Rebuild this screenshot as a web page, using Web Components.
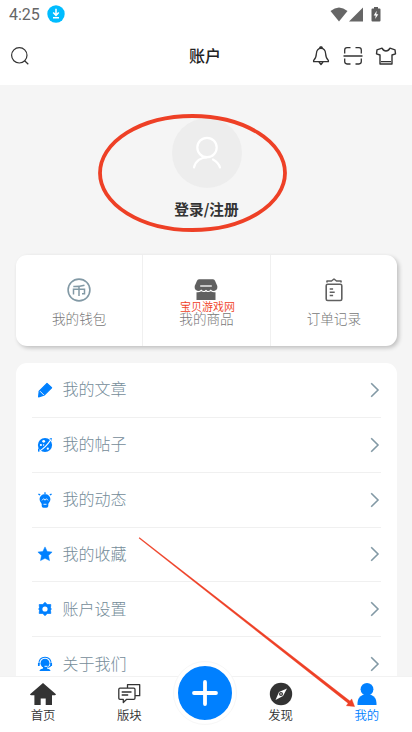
<!DOCTYPE html>
<html lang="zh-CN">
<head>
<meta charset="utf-8">
<title>账户</title>
<style>
html,body{margin:0;padding:0;width:412px;height:732px;overflow:hidden;background:#f5f5f5;font-family:"Noto Sans CJK SC","Noto Sans",sans-serif}
</style>
</head>
<body>
<account-app></account-app>
<script>
const ICONS = {
  download: [18,18,'<circle cx="9" cy="9" r="8.7" fill="#00bcff"/><path d="M9 3.8v6M6.200 7.400 9 10.300l2.800-2.900M6 12.800h6" stroke="#fff" stroke-width="1.500" fill="none"/>'],
  wifi: [18,15,'<path d="M.5 4Q9-3 17.500 4L9 14.500Z" fill="#666"/>'],
  signal: [14,15,'<path d="M14 .5V14.500H0Z" fill="#666"/>'],
  battery: [10,15,'<path d="M3 0h4v1.500h1.500Q9.500 1.500 9.500 2.500v11q0 1-1 1h-7q-1 0-1-1v-11q0-1 1-1H3Z" fill="#5e5e5e"/><path d="M5.700 3.700 2.700 8.500h2l-.5 3.500L7.300 7.200h-2Z" fill="#fff"/>'],
  search: [20,20,'<g fill="none" stroke="#333" stroke-width="1.200"><circle cx="9.300" cy="9.300" r="7.700"/><path d="m14.600 14.800 3.700 3.500"/></g>'],
  bell: [18,20,'<g fill="none" stroke="#333" stroke-width="1.300" stroke-linejoin="round"><path d="M9 2.300C5.800 2.300 4.600 4.700 4.400 7.500c-.2 4-1.200 5.600-2.800 7v1.200h14.800v-1.200c-1.600-1.400-2.600-3-2.800-7-.2-2.800-1.400-5.200-4.600-5.200ZM7 16l2 2.500 2-2.500M7.600 2.300 8.300.9h1.400l.7 1.400"/></g>'],
  scan: [20,20,'<path d="M7.500 1.600H4Q1.700 1.600 1.700 4v3.500M12.500 1.600H16q2.300 0 2.300 2.400v3.500M7.500 18H4q-2.300 0-2.300-2.400v-3M12.500 18H16q2.300 0 2.300-2.400v-3M.5 10h19" fill="none" stroke="#333" stroke-width="1.300"/>'],
  shirt: [22,20,'<path d="M7 2.200 2 3.800 1.500 7.800 5 9v9h12V9l3.500-1.200L20 3.800 15 2.200Q13.500 5 11 5T7 2.200ZM6 15.600h10" fill="none" stroke="#333" stroke-width="1.400" stroke-linejoin="round"/>'],
  avatar: [32,36,'<g fill="none" stroke="#fff" stroke-width="2.200" stroke-linecap="round"><circle cx="16" cy="12.500" r="9.700"/><path d="M3 32.500C4.500 26 10 22.300 16 22.300M22 24.500q5.500 3 7 8"/></g>'],
  wallet: [24,24,'<g fill="none" stroke="#8299a5"><circle cx="12" cy="12" r="10.900" stroke-width="1.600"/><path d="M17.500 7.300Q12 8.700 6.300 8.500M6.500 16.500v-5.300h11v4.500H15M12 8v10" stroke-width="1.500"/></g>'],
  shop: [24,24,'<path d="M5 1.200h14q1.500 0 2 1.600L23.300 8v2.200Q22.500 13 20 13q-2 0-3.200-1.600Q15.500 13 13.700 13L12 11.800 10.300 13Q8.500 13 7.200 11.400 6 13 4 13 1.500 13 .7 10.200V8L3 2.800Q3.500 1.200 5 1.200ZM2.500 14.200Q5 14.800 7.200 13.300q2.300 1.500 4.800.2 2.500 1.300 4.800-.2 2.200 1.500 4.700.9V22h-19Z" fill="#606060"/><path d="M6.200 8h11.600" stroke="#fff" stroke-width="1.300"/>'],
  orders: [20,24,'<g fill="none" stroke="#606060" stroke-width="1.600" stroke-linejoin="round"><rect x="2.200" y="6.200" width="15.600" height="16.300" rx="1.500"/><path d="M3 4.400V3h4.500L10 1l2.500 2H17v1.400M5.700 11h3.400M5.700 14.300h5M5.700 17.500h3.400"/></g>'],
  pencil: [16,16,'<path d="m10 1.500 4.600 4.200-7.600 7.500-5.400 1.600.6-5.600Z" fill="#0080ff" stroke="#0080ff" stroke-width="1.200" stroke-linejoin="round"/><path d="m3 9.200 4 4" stroke="#fff" stroke-width=".9"/>'],
  planet: [16,16,'<circle cx="8" cy="8" r="7.100" fill="#0080ff"/><path d="M1 11v3.800l3-.8M12.500 1.600l2.400-.6-.5 3" fill="#0080ff"/><path d="M2.500 14C7 11.500 11 7 14 2.500" fill="none" stroke="#fff" stroke-width="1.200"/><g fill="#fff"><circle cx="6.700" cy="4.300" r="1.400"/><circle cx="3.900" cy="8" r="1.100"/><circle cx="10.800" cy="11.700" r="1.100"/><circle cx="6.600" cy="8" r=".7"/></g>'],
  bulb: [16,16,'<path d="M8 2.200c-3.200 0-5.400 2.100-5.400 5 0 2.400 1.600 3.200 2.100 4.800V14q0 1.800 1.800 1.800h3q1.800 0 1.800-1.800v-2c.5-1.600 2.100-2.400 2.100-4.800 0-2.900-2.200-5-5.400-5Z" fill="#0080ff"/><path d="M8 .2v2M1.400 2.100l1.800.8M14.600 2.100l-1.800.8" stroke="#0080ff" stroke-width="1.300"/><path d="m5 8.400 1.700-1.700L8 8.200l1.400-1.500L11 8.400M6.500 12.300h3" fill="none" stroke="#fff" stroke-width=".9"/>'],
  star: [16,16,'<path d="m8 .9 2.200 4.600 4.900.6-3.600 3.500 1 5L8 12.300l-4.500 2.300 1-5L.9 6.100l4.900-.6Z" fill="#0080ff" stroke="#0080ff" stroke-width=".5"/>'],
  gear: [16,16,'<path d="M8 1.300 10.200 3.600h3.600l-.3 2.900L14.200 8l-.7 1.500.3 2.900h-3.600L8 14.700l-2.200-2.300H2.200l.3-2.900L1.800 8l.7-1.500-.3-2.900h3.600Z" fill="#0080ff" stroke="#0080ff" stroke-width=".8" stroke-linejoin="round"/><circle cx="8" cy="8" r="2.600" fill="#fff"/>'],
  support: [16,16,'<path d="M2 8.500C1.500 4 4 1.300 8 1.300S14.500 4 14 8.500q0 2.500-3.500 3" fill="none" stroke="#0080ff" stroke-width="1.100"/><circle cx="8" cy="7.300" r="4.500" fill="#0080ff"/><path d="M1.800 7v3M14.200 7v3" stroke="#0080ff" stroke-width="1.700"/><path d="M2.300 15Q3 12.800 6 12.500V11h4v1.500q3 .3 3.700 2.500Z" fill="#0080ff"/><path d="M7.500 10.300h3" stroke="#fff" stroke-width="1"/>'],
  chevron: [10,16,'<path d="m1.200 1.200 6.800 6.800-6.800 6.800" fill="none" stroke="#8299a5" stroke-width="1.600"/>'],
  home: [26,24,'<path d="M13 1 26 12.300q-.5 1-1.500.9H22V23h-6.300v-6.500h-5V23H4.400v-9.800H1.500Q.2 13.300 0 12.300Z" fill="#333"/>'],
  chat: [24,24,'<g fill="none" stroke="#333" stroke-width="1.300" stroke-linejoin="round"><path d="M10.500 6V2.700h12.200v11h-4.200M3 6.200h13.800q1.200 0 1.200 1.200v8.700q0 1.200-1.200 1.200H9.700L6.300 20.500v-3.200H3q-1.200 0-1.200-1.200V7.400Q1.800 6.200 3 6.200ZM4.700 10h9.800M4.700 13h6.500"/></g>'],
  compass: [24,24,'<circle cx="12" cy="12" r="11.200" fill="#333"/><path d="M18 6.500 14 14l-7.500 4L10 10Z" fill="#fff"/><circle cx="12" cy="12" r="2" fill="#333"/><circle cx="12" cy="12" r=".8" fill="#fff"/>'],
  person: [20,24,'<circle cx="10" cy="7.300" r="6.400" fill="#0080ff"/><path d="M.5 23v-2q0-6 5.500-8.300h8q5.500 2.300 5.500 8.300v2Z" fill="#0080ff"/>'],
  plus: [26,26,'<path d="M13 2v22M2 13h22" stroke="#fff" stroke-width="3.800" stroke-linecap="round"/>']
};
function define(name, markup) {
  customElements.define(name, class extends HTMLElement {
    connectedCallback() {
      if (this.shadowRoot) return;
      const t = document.createElement('template');
      t.innerHTML = typeof markup === 'function' ? markup(this) : markup;
      this.attachShadow({mode:'open'}).append(t.content.cloneNode(true));
    }
  });
}
define('ui-icon', el => {
  const [w,h,art] = ICONS[el.getAttribute('name')];
  return `<style>:host{display:block;flex:none;width:${w}px;height:${h}px}svg{display:block}</style><svg width="${w}" height="${h}" viewBox="0 0 ${w} ${h}">${art}</svg>`;
});
define('status-bar', `<style>
:host{display:flex;height:28px;align-items:center;padding:0 31px 0 9px;box-sizing:border-box;background:#fff}
span{font:16px/20px Roboto,sans-serif;color:#666;margin:1px 7px 0 0}
.gap{flex:1}.bat{margin-left:8px}.sig{margin-left:1px}
</style><span>4:25</span><ui-icon name="download"></ui-icon><div class="gap"></div><ui-icon name="wifi"></ui-icon><ui-icon class="sig" name="signal"></ui-icon><ui-icon class="bat" name="battery"></ui-icon>`);
define('title-bar', `<style>
:host{display:grid;grid-template-columns:1fr auto 1fr;align-items:center;height:57px;background:#fff;padding:0 15px 2px 10px;box-sizing:border-box}
h1{margin:0 0 1px 3px;font-size:16px;line-height:24px;font-weight:500;color:#222}
.r{display:flex;justify-content:flex-end;align-items:center;gap:12.500px}
</style><ui-icon name="search"></ui-icon><h1><slot></slot></h1><div class="r"><ui-icon name="bell"></ui-icon><ui-icon name="scan"></ui-icon><ui-icon name="shirt"></ui-icon></div>`);
define('user-profile', `<style>
:host{display:flex;flex-direction:column;align-items:center;height:170px;box-sizing:border-box;padding:32.500px 0 0 1px}
.a{width:70px;height:70px;border-radius:50%;background:#ededed;display:flex;align-items:center;justify-content:center}
b{font-size:14.700px;line-height:20px;font-weight:700;color:#333;margin-top:11.500px}
</style><div class="a"><ui-icon name="avatar"></ui-icon></div><b><slot></slot></b>`);
define('quick-card', `<style>
:host{display:flex;margin:0 15px 0 16px;height:91px;border-radius:11px;background:#fff;box-shadow:2px 2px 4px rgba(0,0,0,.22)}
</style><slot></slot>`);
define('quick-item', el => `<style>
:host{flex:1 1 0;width:0;display:flex;flex-direction:column;align-items:center;padding-top:23px;box-sizing:border-box}
:host(:not(:last-child)){border-right:1px solid #f0f0f0}
span{font-size:13.600px;line-height:20px;margin-top:6px;color:#777;font-weight:300}
</style><ui-icon name="${el.getAttribute('icon')}"></ui-icon><span><slot></slot></span>`);
define('menu-card', `<style>
:host{display:block;margin:17px 15px 0 16px;padding:0 16px;background:#fff;border-radius:11px;height:380px}
</style><slot></slot>`);
define('menu-row', el => `<style>
:host{display:flex;align-items:center;height:54.850px;box-sizing:border-box;border-bottom:1px solid #f0f0f0;padding:0 1px 0 5px}
span{flex:1;font-size:16px;line-height:24px;color:#748c99;font-weight:300;margin:0 0 3px 9.500px}
</style><ui-icon name="${el.getAttribute('icon')}"></ui-icon><span><slot></slot></span><ui-icon name="chevron"></ui-icon>`);
define('tab-item', el => `<style>
:host{flex:1 1 0;display:flex;flex-direction:column;align-items:center;padding-top:5px;color:#333}
:host([active]){color:#0080ff}
span{font-size:12.400px;line-height:18px;font-weight:350}
</style><ui-icon name="${el.getAttribute('icon')}"></ui-icon><span><slot></slot></span>`);
define('add-button', `<style>
:host{flex:0 0 65px;display:flex;justify-content:center;align-items:flex-start}
div{flex:none;width:54px;height:54px;border-radius:50%;background:#0080ff;border:4px solid #fff;outline:1px solid #f7f7f7;margin-top:-15px;display:flex;align-items:center;justify-content:center}
</style><div><ui-icon name="plus"></ui-icon></div>`);
define('tab-bar', `<style>
:host{position:absolute;left:0;right:0;bottom:0;height:56px;box-sizing:border-box;background:#fff;border-top:1px solid #f2f2f2;display:flex;padding-right:2px}
</style><slot></slot>`);
define('mark-overlay', `<style>
:host{position:absolute;inset:0;pointer-events:none}
svg{position:absolute;inset:0}
span{position:absolute;left:180px;top:298px;font-size:11px;line-height:16px;color:#f04026;white-space:nowrap;font-weight:350}
</style><svg width="412" height="732"><ellipse cx="192.500" cy="173" rx="92.500" ry="57" fill="none" stroke="#ee4026" stroke-width="3.800"/><path d="m139 538.200.5-.6 210.500 163.500 1.700-2.200 2.900 7.700-8.200-.9 1.700-2.500Z" fill="#ee4026" stroke="#ee4026" stroke-width=".4"/></svg><span><slot></slot></span>`);
define('account-app', `<style>
:host{display:block;position:relative;width:412px;height:732px;overflow:hidden;background:#f5f5f5}
</style>
<status-bar></status-bar><title-bar>账户</title-bar><user-profile>登录/注册</user-profile>
<quick-card><quick-item icon="wallet">我的钱包</quick-item><quick-item icon="shop">我的商品</quick-item><quick-item icon="orders">订单记录</quick-item></quick-card>
<menu-card><menu-row icon="pencil">我的文章</menu-row><menu-row icon="planet">我的帖子</menu-row><menu-row icon="bulb">我的动态</menu-row><menu-row icon="star">我的收藏</menu-row><menu-row icon="gear">账户设置</menu-row><menu-row icon="support">关于我们</menu-row></menu-card>
<tab-bar><tab-item icon="home">首页</tab-item><tab-item icon="chat">版块</tab-item><add-button></add-button><tab-item icon="compass">发现</tab-item><tab-item icon="person" active>我的</tab-item></tab-bar>
<mark-overlay>宝贝游戏网</mark-overlay>`);
</script>
</body>
</html>
